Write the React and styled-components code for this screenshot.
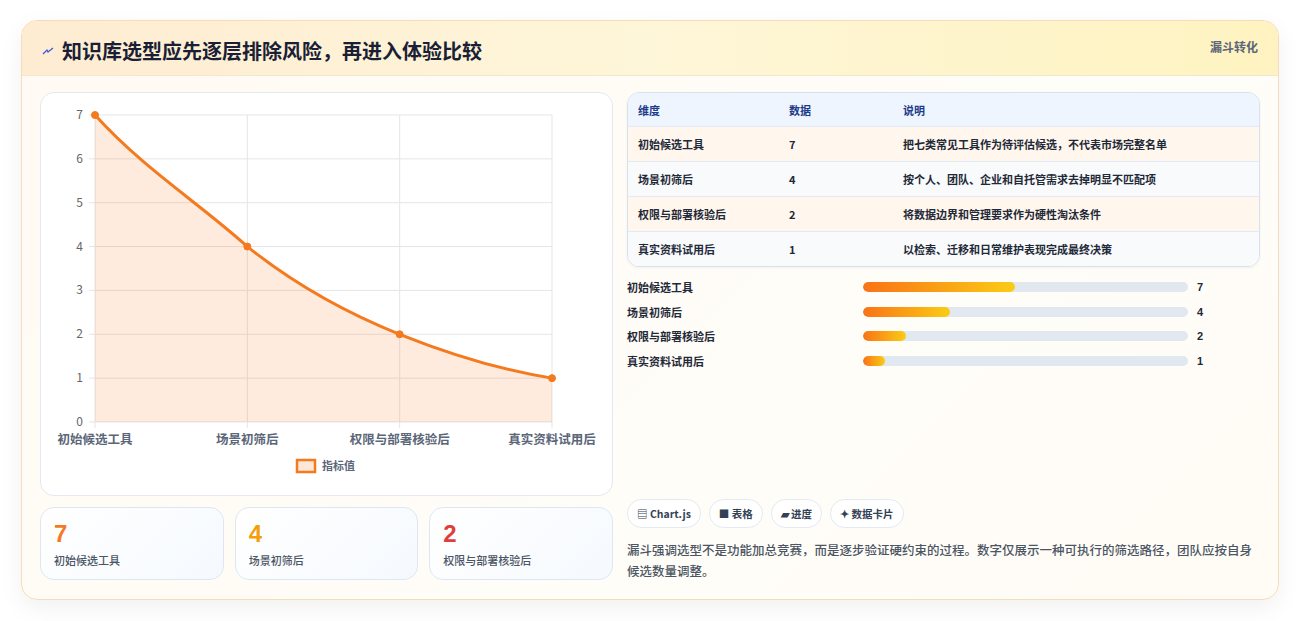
import React from 'react'
import styled, { createGlobalStyle } from 'styled-components'

const GlobalStyle = createGlobalStyle`
  body {
    margin: 0;
    background: #ffffff;
    font-family: "Noto Sans CJK SC", "Noto Sans", sans-serif;
  }
`

const Page = styled.div`
  padding: 20px 21px 23px 21px;
  height: 621px;
  box-sizing: border-box;
`
const Card = styled.div`
  border: 1px solid #f6dcb8;
  border-radius: 16px;
  background: linear-gradient(135deg, #fffaf3 0%, #fffdf8 60%, #fffcf6 100%);
  box-shadow: 0 8px 24px rgba(0, 0, 0, 0.06);
  height: 100%;
  display: flex;
  flex-direction: column;
  overflow: hidden;
`
const Header = styled.div`
  display: flex;
  align-items: flex-start;
  justify-content: space-between;
  height: 55px;
  box-sizing: border-box;
  padding: 15px 20px 0 20px;
  background: linear-gradient(90deg, #feecd2 0%, #fef6d8 50%, #fef3c0 100%);
  border-bottom: 1px solid #f3e6cf;
`
const Title = styled.h1`
  margin: 0;
  font-size: 20px;
  font-weight: 700;
  color: #1a1f36;
  display: flex;
  align-items: center;
  gap: 8px;
`
const Tag = styled.span`
  font-size: 12px;
  font-weight: 700;
  color: #5b6678;
  padding-top: 2px;
`
const Body = styled.div`
  flex: 1;
  display: grid;
  grid-template-columns: 573px 1fr;
  gap: 14px;
  padding: 16px 18px 18px 18px;
`
const LeftCol = styled.div`
  display: flex;
  flex-direction: column;
  gap: 11px;
`
const ChartCard = styled.div`
  height: 404px;
  box-sizing: border-box;
  border: 1px solid #e3e9f2;
  border-radius: 14px;
  background: #ffffff;
`
const Stats = styled.div`
  display: grid;
  grid-template-columns: repeat(3, 1fr);
  gap: 11px;
`
const Stat = styled.div`
  height: 73px;
  box-sizing: border-box;
  border: 1px solid #dde7f3;
  border-radius: 14px;
  background: linear-gradient(135deg, #ffffff, #f5f9fe);
  padding: 12px 13px;
`
const StatNum = styled.div`
  font-family: "Liberation Sans", Arial, sans-serif;
  font-size: 24px;
  font-weight: 700;
  color: ${p => p.color};
  line-height: 28px;
`
const StatLabel = styled.div`
  font-size: 11px;
  font-weight: 500;
  color: #4b5563;
  margin-top: 4px;
`
const RightCol = styled.div`
  display: flex;
  flex-direction: column;
`
const Table = styled.div`
  border: 1px solid #d6e2f0;
  border-radius: 12px;
  overflow: hidden;
  box-shadow: 0 1px 3px rgba(0, 0, 0, 0.05);
`
const Row = styled.div`
  display: grid;
  grid-template-columns: 151px 114px 1fr;
  height: ${p => (p.head ? 33 : 35)}px;
  box-sizing: border-box;
  align-items: center;
  padding-left: 10px;
  font-size: 11px;
  font-weight: ${p => (p.head ? 700 : 600)};
  color: ${p => (p.head ? '#1e3a8a' : '#1f2937')};
  background: ${p => (p.head ? '#eef5fe' : p.odd ? '#fff7ee' : '#f8fafc')};
  border-top: ${p => (p.head ? 'none' : '1px solid #e3eaf3')};
`
const Bars = styled.div`
  display: flex;
  flex-direction: column;
  gap: 11.5px;
  margin-top: 12px;
`
const BarRow = styled.div`
  display: grid;
  grid-template-columns: 236px 325px 1fr;
  align-items: center;
  font-size: 11px;
  font-weight: 600;
  color: #1f2937;
  height: 13px;
`
const Track = styled.div`
  height: 10px;
  border-radius: 5px;
  background: #e2e8f0;
  overflow: hidden;
`
const Fill = styled.div`
  height: 100%;
  border-radius: 5px;
  background: linear-gradient(90deg, #f97316, #facc15);
`
const BarVal = styled.span`
  font-family: "Liberation Sans", Arial, sans-serif;
  font-weight: 700;
  padding-left: 9px;
`
const Chips = styled.div`
  display: flex;
  gap: 8px;
  margin-top: auto;
`
const Chip = styled.span`
  height: 29px;
  box-sizing: border-box;
  padding: 0 9px;
  border: 1px solid #e3e9f2;
  border-radius: 15px;
  background: #ffffff;
  display: flex;
  align-items: center;
  gap: 4px;
  font-size: 10.5px;
  font-weight: 700;
  color: #334155;
`
const Note = styled.p`
  margin: 11px 0 0 0;
  font-size: 12.5px;
  line-height: 21px;
  font-weight: 500;
  color: #4b5563;
`

const data = [
  { label: '初始候选工具', value: 7, note: '把七类常见工具作为待评估候选，不代表市场完整名单' },
  { label: '场景初筛后', value: 4, note: '按个人、团队、企业和自托管需求去掉明显不匹配项' },
  { label: '权限与部署核验后', value: 2, note: '将数据边界和管理要求作为硬性淘汰条件' },
  { label: '真实资料试用后', value: 1, note: '以检索、迁移和日常维护表现完成最终决策' }
]

function Chart () {
  const x0 = 54
  const x1 = 511
  const y0 = 329
  const step = (329 - 22) / 7
  const xs = data.map((d, i) => x0 + (i * (x1 - x0)) / 3)
  const ys = data.map(d => y0 - d.value * step)
  const line = `M${xs[0]},${ys[0]} C${xs[0] + 50},${ys[0] + 55} ${xs[1] - 50},${ys[1] - 45} ${xs[1]},${ys[1]} C${xs[1] + 50},${ys[1] + 40} ${xs[2] - 50},${ys[2] - 20} ${xs[2]},${ys[2]} C${xs[2] + 50},${ys[2] + 20} ${xs[3] - 50},${ys[3] - 8} ${xs[3]},${ys[3]}`
  const text = { fontFamily: '"Noto Sans CJK SC", sans-serif', fontSize: 12, fill: '#666' }
  return (
    <svg width='572' height='402'>
      {[0, 1, 2, 3, 4, 5, 6, 7].map(v => (
        <g key={v}>
          <line x1={x0 - 6} x2={x1} y1={y0 - v * step} y2={y0 - v * step} stroke='#e5e5e5' />
          <text x={x0 - 12} y={y0 - v * step + 4} textAnchor='end' style={text}>{v}</text>
        </g>
      ))}
      {xs.map((x, i) => (
        <line key={i} x1={x} x2={x} y1={22} y2={y0 + 6} stroke='#e5e5e5' />
      ))}
      <path d={`${line} L${x1},${y0} L${x0},${y0} Z`} fill='rgba(249,115,22,0.14)' />
      <path d={line} fill='none' stroke='#f47a1f' strokeWidth='3' />
      {xs.map((x, i) => (
        <circle key={i} cx={x} cy={ys[i]} r='3.5' fill='#f47a1f' stroke='#f47a1f' />
      ))}
      {data.map((d, i) => (
        <text key={i} x={xs[i]} y={351} textAnchor='middle' style={{ ...text, fontSize: 12.5, fill: '#5b6678', fontWeight: 600 }}>{d.label}</text>
      ))}
      <rect x='256' y='367' width='18' height='12' fill='#fde7d6' stroke='#f47a1f' strokeWidth='2.5' />
      <text x='281' y='377' style={{ ...text, fontSize: 11, fill: '#5b6678', fontWeight: 600 }}>指标值</text>
    </svg>
  )
}

export default function App () {
  return (
    <>
      <GlobalStyle />
      <Page>
        <Card>
          <Header>
            <Title>
              <svg width='12' height='10' viewBox='0 0 12 10'>
                <path d='M1 8 L5 4 L6 6 L11 2' stroke='#3b5bdb' strokeWidth='1.3' fill='none' />
              </svg>
              知识库选型应先逐层排除风险，再进入体验比较
            </Title>
            <Tag>漏斗转化</Tag>
          </Header>
          <Body>
            <LeftCol>
              <ChartCard>
                <Chart />
              </ChartCard>
              <Stats>
                <Stat><StatNum color='#f47a1f'>7</StatNum><StatLabel>初始候选工具</StatLabel></Stat>
                <Stat><StatNum color='#f59e0b'>4</StatNum><StatLabel>场景初筛后</StatLabel></Stat>
                <Stat><StatNum color='#e03e3e'>2</StatNum><StatLabel>权限与部署核验后</StatLabel></Stat>
              </Stats>
            </LeftCol>
            <RightCol>
              <Table>
                <Row head><span>维度</span><span>数据</span><span>说明</span></Row>
                {data.map((d, i) => (
                  <Row key={d.label} odd={i % 2 === 0}>
                    <span>{d.label}</span><span>{d.value}</span><span>{d.note}</span>
                  </Row>
                ))}
              </Table>
              <Bars>
                {data.map(d => (
                  <BarRow key={d.label}>
                    <span>{d.label}</span>
                    <Track><Fill style={{ width: `${(d.value / 15) * 100}%` }} /></Track>
                    <BarVal>{d.value}</BarVal>
                  </BarRow>
                ))}
              </Bars>
              <Chips>
                <Chip>▤ Chart.js</Chip>
                <Chip>■ 表格</Chip>
                <Chip>▰ 进度</Chip>
                <Chip>✦ 数据卡片</Chip>
              </Chips>
              <Note>漏斗强调选型不是功能加总竞赛，而是逐步验证硬约束的过程。数字仅展示一种可执行的筛选路径，团队应按自身候选数量调整。</Note>
            </RightCol>
          </Body>
        </Card>
      </Page>
    </>
  )
}
